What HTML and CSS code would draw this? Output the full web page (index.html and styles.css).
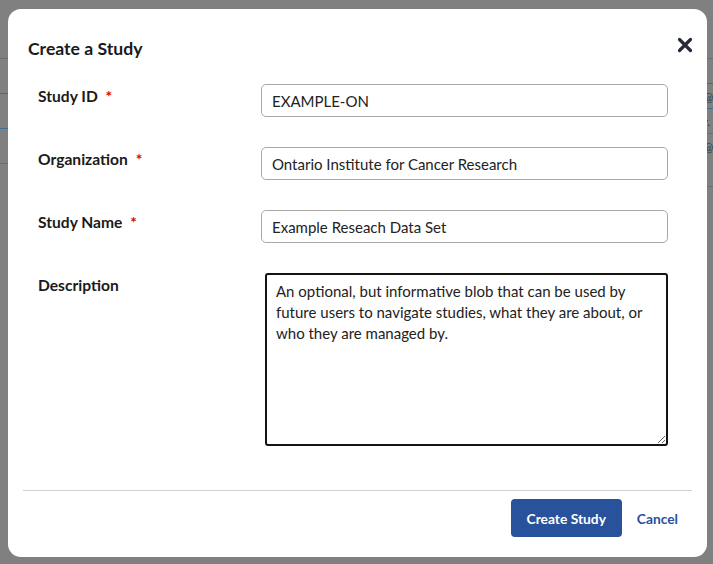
FILE: index.html
```html
<!DOCTYPE html>
<html lang="en">
<head>
<meta charset="utf-8">
<title>Create a Study</title>
<link rel="stylesheet" href="styles.css">
</head>
<body>
<div class="page">
  <div class="page-col page-left">
    <div class="row gap-a"></div>
    <div class="row line-gray"></div>
    <div class="row line-blue"></div>
    <div class="row line-blue"></div>
    <div class="row line-gray"></div>
  </div>
  <div class="page-col page-right">
    <div class="row gap-a"></div>
    <div class="row line-gray short"></div>
    <div class="row line-blue short"><span class="glyph">@</span></div>
    <div class="row line-blue short"><span class="glyph">r.</span></div>
    <div class="row line-gray tall"><span class="glyph">@</span></div>
  </div>
</div>

<div class="overlay">
  <div class="modal">
    <div class="modal-head">
      <h2 class="modal-title">Create a Study</h2>
      <button class="close" type="button" aria-label="Close">
        <svg width="16" height="16" viewBox="0 0 16 16"><path d="M2.5 2.5 L13.5 13.5 M13.5 2.5 L2.5 13.5" stroke="#262a38" stroke-width="3.2" stroke-linecap="round" fill="none"/></svg>
      </button>
    </div>
    <form class="fields">
      <label class="label">Study ID <span class="req">*</span></label>
      <input class="input" type="text" value="EXAMPLE-ON">
      <label class="label">Organization <span class="req">*</span></label>
      <input class="input" type="text" value="Ontario Institute for Cancer Research">
      <label class="label">Study Name <span class="req">*</span></label>
      <input class="input" type="text" value="Example Reseach Data Set">
      <label class="label">Description</label>
      <textarea class="textarea">An optional, but informative blob that can be used by future users to navigate studies, what they are about, or who they are managed by.</textarea>
    </form>
    <div class="divider"></div>
    <div class="modal-foot">
      <button class="btn-primary" type="button">Create Study</button>
      <button class="btn-link" type="button">Cancel</button>
    </div>
  </div>
</div>
</body>
</html>
```

FILE: styles.css
```css
* { box-sizing: border-box; }
html, body { margin: 0; padding: 0; }
body {
  width: 713px;
  height: 564px;
  overflow: hidden;
  background: #808080;
  font-family: "Lato", "Open Sans", sans-serif;
  position: relative;
}

.page {
  display: flex;
  justify-content: space-between;
  height: 564px;
}
.page-col { display: flex; flex-direction: column; width: 40px; }
.row { position: relative; }
.gap-a { height: 58px; }
.line-gray { border-top: 1px solid #6c6c6c; height: 35px; }
.line-blue { border-top: 1px solid #3f6f98; height: 35px; }
.page-right .short { height: 25px; }
.page-right .tall { height: 54px; border-bottom: 1px solid #6c6c6c; }
.glyph {
  position: absolute;
  left: 31px;
  top: 6px;
  font-size: 11px;
  color: #2f3a4a;
}

.overlay {
  position: absolute;
  top: 0; left: 0;
  width: 713px; height: 564px;
  padding: 9px 0 0 8px;
}

.modal {
  width: 699px;
  height: 548px;
  background: #fff;
  border-radius: 13px;
  display: flex;
  flex-direction: column;
}

.modal-head {
  display: flex;
  justify-content: space-between;
  align-items: flex-start;
  padding: 29px 14px 0 20px;
}
.modal-title {
  margin: 0;
  font-size: 17.6px;
  line-height: 22px;
  font-weight: 700;
  color: #1a1a1a;
}
.close {
  border: 0;
  background: none;
  padding: 0;
  width: 16px;
  height: 16px;
  margin-top: -1px;
  cursor: pointer;
}
.close svg { display: block; }

.fields {
  margin: 24px 0 0 0;
  padding: 0 39px 0 30px;
  display: grid;
  grid-template-columns: 223px 407px;
  row-gap: 30px;
}
.label {
  font-size: 15.6px;
  line-height: 20px;
  font-weight: 700;
  color: #1a1a1a;
  padding-top: 2px;
}
.req { color: #e00000; margin-left: 4px; }

.input {
  height: 33px;
  width: 407px;
  border: 1px solid #a9a9a9;
  border-radius: 5px;
  padding: 0 10px;
  font-family: inherit;
  font-size: 15px;
  color: #222;
  background: #fff;
  outline: none;
}
.textarea {
  margin-left: 4px;
  width: 403px;
  height: 173px;
  border: 2px solid #141414;
  border-radius: 3px;
  padding: 6px 9px;
  font-family: inherit;
  font-size: 15px;
  line-height: 21px;
  color: #222;
  outline: none;
}

.divider {
  margin: 44px 15px 0 15px;
  border-top: 1px solid #cfcfcf;
}

.modal-foot {
  display: flex;
  justify-content: flex-end;
  align-items: center;
  padding: 8px 29px 0 0;
  gap: 15px;
}
.btn-primary {
  height: 38px;
  width: 111px;
  border: 0;
  border-radius: 4px;
  background: #28529c;
  color: #fff;
  font-family: inherit;
  font-weight: 700;
  font-size: 13.8px;
  cursor: pointer;
}
.btn-link {
  border: 0;
  background: none;
  padding: 0;
  color: #2a4f9b;
  font-family: inherit;
  font-weight: 700;
  font-size: 13.8px;
  cursor: pointer;
}
```
